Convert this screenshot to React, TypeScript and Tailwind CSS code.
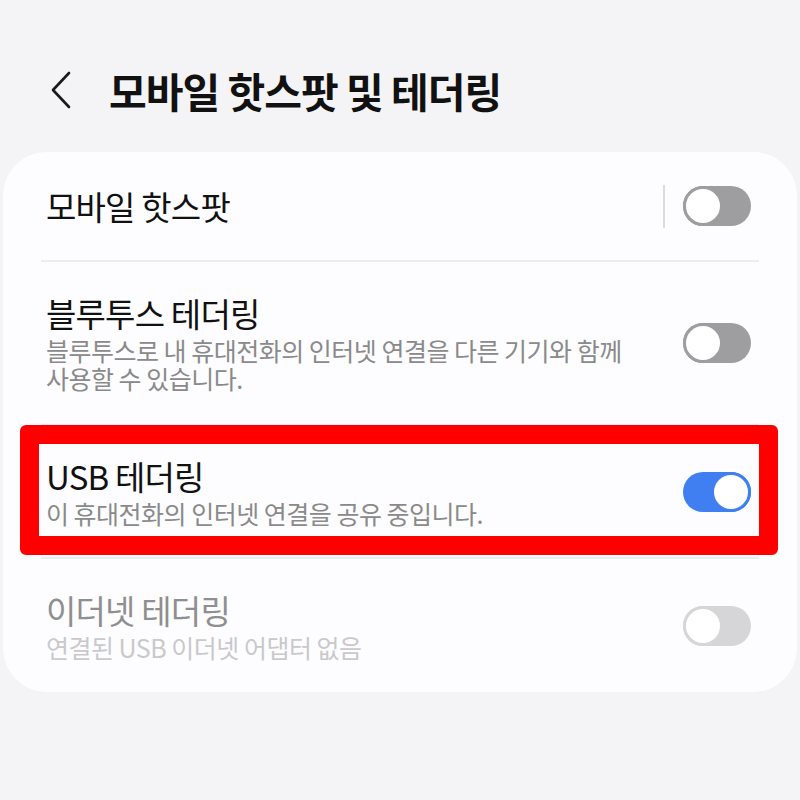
import React from "react";

const FONT = '"Noto Sans CJK KR", "Noto Sans", sans-serif';

function Toggle({ on, color }: { on: boolean; color: string }) {
  return (
    <div
      className="relative w-[68px] h-[40px] rounded-full shrink-0"
      style={{ backgroundColor: color }}
    >
      <div
        className={
          "absolute top-0 w-[40px] h-[40px] rounded-full bg-white border-[3px] " +
          (on ? "right-0" : "left-0")
        }
        style={{ borderColor: color }}
      />
    </div>
  );
}

export default function App() {
  return (
    <div
      className="relative w-[800px] h-[800px] bg-[#f4f4f6] overflow-hidden"
      style={{ fontFamily: FONT }}
    >
      {/* Header */}
      <div className="h-[152px] flex items-center pl-[50px] pt-[28px]">
        <svg width="22" height="38" viewBox="0 0 22 38" className="shrink-0">
          <path
            d="M19 2 L3 19 L19 36"
            fill="none"
            stroke="#1a1a1a"
            strokeWidth="2.6"
            strokeLinecap="round"
            strokeLinejoin="round"
          />
        </svg>
        <div className="ml-[37px] text-[41px] font-bold tracking-[-1px] text-[#111111] leading-none">
          모바일 핫스팟 및 테더링
        </div>
      </div>

      {/* Card */}
      <div className="mx-[3px] rounded-[44px] bg-[#fdfdff] overflow-hidden">
        {/* Row 1 */}
        <div className="h-[108px] flex items-center justify-between pl-[43px] pr-[46px]">
          <div className="text-[33px] tracking-[-0.8px] text-[#111111] leading-none">
            모바일 핫스팟
          </div>
          <div className="flex items-center gap-[18px]">
            <div className="w-[2px] h-[43px] bg-[#dcdcde]" />
            <Toggle on={false} color="#9e9ea0" />
          </div>
        </div>
        <div className="mx-[38px] h-[2px] bg-[#ececef]" />

        {/* Row 2 */}
        <div className="h-[162px] flex items-center justify-between pl-[43px] pr-[46px]">
          <div className="flex flex-col">
            <div className="text-[33px] tracking-[-0.8px] text-[#111111] leading-[38px]">
              블루투스 테더링
            </div>
            <div className="mt-[4px] text-[25px] tracking-[-0.5px] text-[#8a8a8a] leading-[28px]">
              블루투스로 내 휴대전화의 인터넷 연결을 다른 기기와 함께
              <br />
              사용할 수 있습니다.
            </div>
          </div>
          <Toggle on={false} color="#9e9ea0" />
        </div>
        <div className="mx-[38px] h-[2px] bg-[#e8ecf1]" />

        {/* Row 3 */}
        <div className="h-[131px] flex items-center justify-between pl-[43px] pr-[46px]">
          <div className="flex flex-col">
            <div className="text-[33px] tracking-[-0.8px] text-[#111111] leading-[38px]">
              USB 테더링
            </div>
            <div className="mt-[4px] text-[25px] tracking-[-0.5px] text-[#8a8a8a] leading-[28px]">
              이 휴대전화의 인터넷 연결을 공유 중입니다.
            </div>
          </div>
          <Toggle on={true} color="#3f7ff1" />
        </div>
        <div className="mx-[38px] h-[2px] bg-[#e8ecf1]" />

        {/* Row 4 */}
        <div className="h-[133px] flex items-center justify-between pl-[43px] pr-[46px]">
          <div className="flex flex-col">
            <div className="text-[33px] tracking-[-0.8px] text-[#8f8f8f] leading-[38px]">
              이더넷 테더링
            </div>
            <div className="mt-[4px] text-[25px] tracking-[-0.5px] text-[#c9c9cb] leading-[28px]">
              연결된 USB 이더넷 어댑터 없음
            </div>
          </div>
          <Toggle on={false} color="#d6d6d8" />
        </div>
      </div>

      {/* Red highlight annotation */}
      <div className="absolute left-[20px] top-[425px] w-[758px] h-[130px] border-[19px] border-[#ff0000] rounded-[6px] pointer-events-none" />
    </div>
  );
}
